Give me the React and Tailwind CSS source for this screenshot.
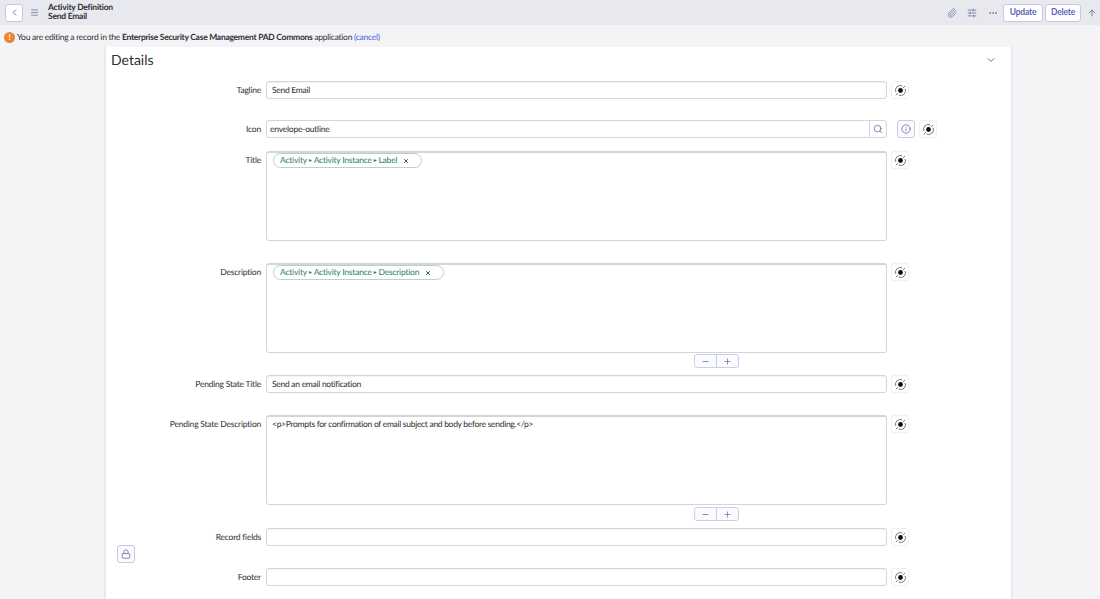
import React from 'react';
import { ChevronLeft, ChevronDown, Menu, Paperclip, SlidersHorizontal, MoreHorizontal, ArrowUp, Search, Info, Lock, Minus, Plus, X } from 'lucide-react';

const font = { fontFamily: 'Lato, sans-serif', textRendering: 'geometricPrecision' };

const Bullseye = () => (
  <svg width="13" height="13" viewBox="0 0 14 14" fill="none" stroke="#6a6c72" strokeWidth="1">
    <circle cx="7" cy="7" r="2.6" fill="#111" stroke="none" />
    <path d="M2 8.8A5.2 5.2 0 0 1 8.8 2" />
    <path d="M12 5.2A5.2 5.2 0 0 1 5.2 12" />
    <path d="M2 12L4.2 9.8M9.8 4.2L12 2" />
  </svg>
);

const ScriptButton = () => (
  <button className="w-[18px] h-[18px] flex items-center justify-center border border-[#f0f0f2] rounded-[3px] bg-white shrink-0">
    <Bullseye />
  </button>
);

const Row = ({ label, className = '', children, btn = true, top = false }) => (
  <div className={`flex ${top ? 'items-start' : 'items-center'} ${className}`}>
    <label className={`w-[155px] text-right text-[8.5px] tracking-[-0.22px] text-[#2e3036] shrink-0 mr-[5px] ${top ? 'pt-[3px]' : ''}`}>{label}</label>
    {children}
    {btn && <div className="ml-[4px]"><ScriptButton /></div>}
  </div>
);

const Input = ({ value }) => (
  <div className="w-[621px] h-[18px] border border-[#d4d5d9] rounded-[3px] bg-white pl-[5px] flex items-center text-[8.5px] tracking-[-0.28px] text-[#2a2c32] shadow-[inset_0_1px_1px_rgba(0,0,0,0.05)]">
    {value}
  </div>
);

const Arrow = () => <span className="text-[5px] mx-[1px] align-[1px]">►</span>;

const Pill = ({ last, width }) => (
  <div className={`-mt-px ml-[1px] ${width} h-[15px] border border-[#b9d3cc] rounded-full flex items-center pl-[6px] text-[8.5px] tracking-[-0.22px] text-[#2b7d6c]`}>
    <span className="whitespace-nowrap">Activity<Arrow />Activity Instance<Arrow />{last}</span>
    <X size={6} strokeWidth={3.5} className="text-[#333] ml-[6px]" />
  </div>
);

const TextBox = ({ children }) => (
  <div className="w-[621px] h-[90px] border border-[#d4d5d9] border-t-2 rounded-[3px] bg-white px-[5px] pt-[1px] text-[8.5px] tracking-[-0.3px] text-[#2a2c32]">
    {children}
  </div>
);

const Resize = () => (
  <div className="flex ml-[588px] h-[14px] w-[45px] border border-[#c9cdef] rounded-[3px] bg-[#fbfbfe]">
    <div className="flex-1 flex items-center justify-center border-r border-[#c9cdef]">
      <Minus size={9} className="text-[#6b6fb0]" />
    </div>
    <div className="flex-1 flex items-center justify-center">
      <Plus size={9} className="text-[#6b6fb0]" />
    </div>
  </div>
);

export default function App() {
  return (
    <div className="w-[1100px] h-[599px] overflow-hidden bg-[#f4f4f7] flex flex-col" style={font}>
      <header className="h-[25px] bg-[#e8e9ee] flex items-center shrink-0">
        <button className="ml-[5px] w-[18px] h-[18px] border border-[#c5c8ea] rounded-[3px] bg-white flex items-center justify-center">
          <ChevronLeft size={11} className="text-[#6a70bd]" />
        </button>
        <Menu size={9} className="ml-[7px] text-[#6b6e96]" />
        <div className="ml-[9px] -mt-[1px] text-[8.5px] tracking-[-0.24px] leading-[9px] font-bold text-[#2e3036]">
          <div>Activity Definition</div>
          <div>Send Email</div>
        </div>
        <div className="ml-auto flex items-center">
          <Paperclip size={10} className="text-[#7b7fa8]" />
          <SlidersHorizontal size={10} className="ml-[10px] text-[#6b6e96]" />
          <MoreHorizontal size={10} className="ml-[11px] text-[#6b6e96]" />
          <button className="ml-[5px] w-[40px] h-[18px] border border-[#c5c8ea] rounded-[3px] bg-white text-[8.5px] tracking-[-0.2px] font-bold text-[#5c62b5]">Update</button>
          <button className="ml-[2px] w-[36px] h-[18px] border border-[#c5c8ea] rounded-[3px] bg-white text-[8.5px] tracking-[-0.2px] font-bold text-[#5c62b5]">Delete</button>
          <ArrowUp size={10} className="ml-[6px] mr-[3px] text-[#6b6e96]" />
        </div>
      </header>

      <div className="h-[22px] flex items-center pl-[4px] pt-[2px] text-[8.5px] tracking-[-0.27px] text-[#2e3036] shrink-0">
        <span className="w-[11px] h-[11px] rounded-full bg-[#e8853a] text-white text-[8px] font-bold flex items-center justify-center mr-[2px]">!</span>
        <span>You are editing a record in the <b>Enterprise Security Case Management PAD Commons</b> application <span className="text-[#4a62d8]">(cancel)</span></span>
      </div>

      <main className="relative ml-[104px] w-[909px] flex-1 bg-white border-x-2 border-[#e8e9ee]">
        <div className="flex items-center justify-between pl-[5px] pr-[14px] h-[25px]">
          <h1 className="text-[14px] text-[#2e3036]">Details</h1>
          <ChevronDown size={12} className="text-[#6b6fb0]" />
        </div>

        <Row label="Tagline" className="mt-[9px]"><Input value="Send Email" /></Row>

        <Row label="Icon" className="mt-[21px]" btn={false}>
          <div className="w-[621px] h-[18px] border border-[#d4d5d9] rounded-[3px] bg-white flex items-center text-[8.5px] tracking-[-0.22px] text-[#2a2c32]">
            <span className="pl-[3px] flex-1">envelope-outline</span>
            <span className="w-[17px] h-full border-l border-[#d4d5d9] flex items-center justify-center">
              <Search size={10} className="text-[#6a70bd]" />
            </span>
          </div>
          <button className="ml-[10px] w-[18px] h-[18px] border border-[#c5c8ea] rounded-[3px] bg-[#fbfbfe] flex items-center justify-center">
            <Info size={10} className="text-[#6a70bd]" />
          </button>
          <div className="ml-[4px]"><ScriptButton /></div>
        </Row>

        <Row label="Title" className="mt-[13px]" top>
          <TextBox>
            <Pill last="Label" width="w-[149px]" />
          </TextBox>
        </Row>

        <Row label="Description" className="mt-[22px]" top>
          <TextBox>
            <Pill last="Description" width="w-[171px]" />
          </TextBox>
        </Row>

        <div className="mt-[1px]"><Resize /></div>

        <Row label="Pending State Title" className="mt-[7px]"><Input value="Send an email notification" /></Row>

        <Row label="Pending State Description" className="mt-[22px]" top>
          <TextBox>&lt;p&gt;Prompts for confirmation of email subject and body before sending.&lt;/p&gt;</TextBox>
        </Row>

        <div className="mt-[2px]"><Resize /></div>

        <Row label="Record fields" className="mt-[7px]"><Input value="" /></Row>
        <Row label="Footer" className="mt-[22px]"><Input value="" /></Row>

        <button className="absolute left-[11px] top-[498px] w-[18px] h-[18px] border border-[#c5c8ea] rounded-[3px] bg-[#fbfbfe] flex items-center justify-center">
          <Lock size={10} className="text-[#6a70bd]" />
        </button>
      </main>
    </div>
  );
}
